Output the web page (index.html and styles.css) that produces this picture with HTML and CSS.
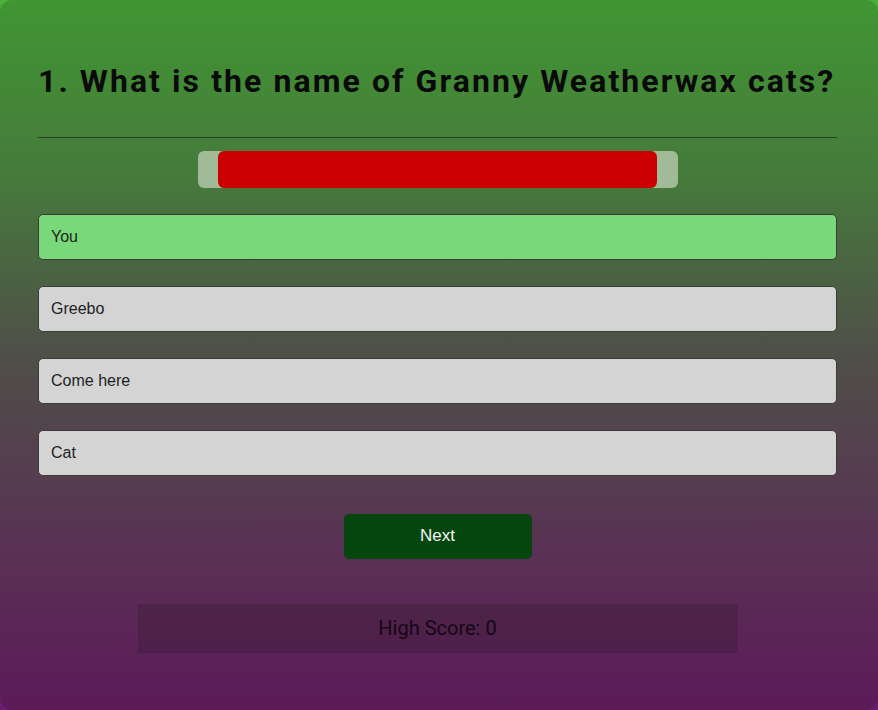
FILE: index.html
```html
<!DOCTYPE html>
<html>
<head>
<meta charset="utf-8">
<link rel="stylesheet" href="styles.css">
</head>
<body>
<div class="card">
  <h1 class="question">1. What is the name of Granny Weatherwax cats?</h1>
  <hr class="divider">
  <div class="progress">
    <div class="progress-fill" style="width: 439px"></div>
  </div>
  <div class="options">
    <div class="option correct">You</div>
    <div class="option">Greebo</div>
    <div class="option">Come here</div>
    <div class="option">Cat</div>
  </div>
  <div class="actions">
    <button class="next">Next</button>
  </div>
  <div class="score">High Score: 0</div>
</div>
</body>
</html>
```
FILE: styles.css
```css
html, body {
  margin: 0;
  padding: 0;
}
body {
  width: 878px;
  height: 710px;
  overflow: hidden;
  background: linear-gradient(#4cae3b, #6e1c74);
  font-family: "Liberation Sans", Arial, sans-serif;
}
.card {
  box-sizing: border-box;
  height: 710px;
  border-radius: 12px;
  background: linear-gradient(#409632 0%, #467a3c 25%, #4f4f48 50%, #5a2f55 80%, #5c1a59 100%);
  padding: 63px 41px 0 38px;
  display: flex;
  flex-direction: column;
}
.question {
  margin: 0;
  font-family: Roboto, sans-serif;
  font-weight: 700;
  font-size: 32px;
  letter-spacing: 2.08px;
  color: #0a0a0a;
  text-align: left;
  white-space: nowrap;
  line-height: 37.5px;
}
.divider {
  margin: 36px 0 0 0;
  border: 0;
  height: 1px;
  background: #2e3a28;
}
.progress {
  margin: 13px auto 0;
  width: 480px;
  height: 37px;
  border-radius: 6px;
  background: #a1ba97;
  display: flex;
  justify-content: center;
}
.progress-fill {
  height: 100%;
  border-radius: 6px;
  background: #cc0000;
}
.options {
  margin-top: 26px;
  display: flex;
  flex-direction: column;
  gap: 26px;
}
.option {
  height: 46px;
  box-sizing: border-box;
  border: 1px solid #3a3a36;
  border-radius: 5px;
  background: #d4d4d4;
  padding: 0 12px;
  display: flex;
  align-items: center;
  font-size: 16px;
  color: #1e1e1e;
}
.option.correct {
  background: #79d97a;
}
.actions {
  margin-top: 38px;
  display: flex;
  justify-content: center;
}
.next {
  width: 188px;
  height: 45px;
  border: 0;
  border-radius: 5px;
  background: #05450e;
  color: #f4f4f4;
  font-family: "Liberation Sans", Arial, sans-serif;
  font-size: 17px;
}
.score {
  margin: 45px auto 0;
  width: 600px;
  height: 49px;
  background: rgba(40, 20, 35, 0.25);
  display: flex;
  align-items: center;
  justify-content: center;
  font-family: Roboto, sans-serif;
  font-size: 20px;
  color: #140814;
}
```
